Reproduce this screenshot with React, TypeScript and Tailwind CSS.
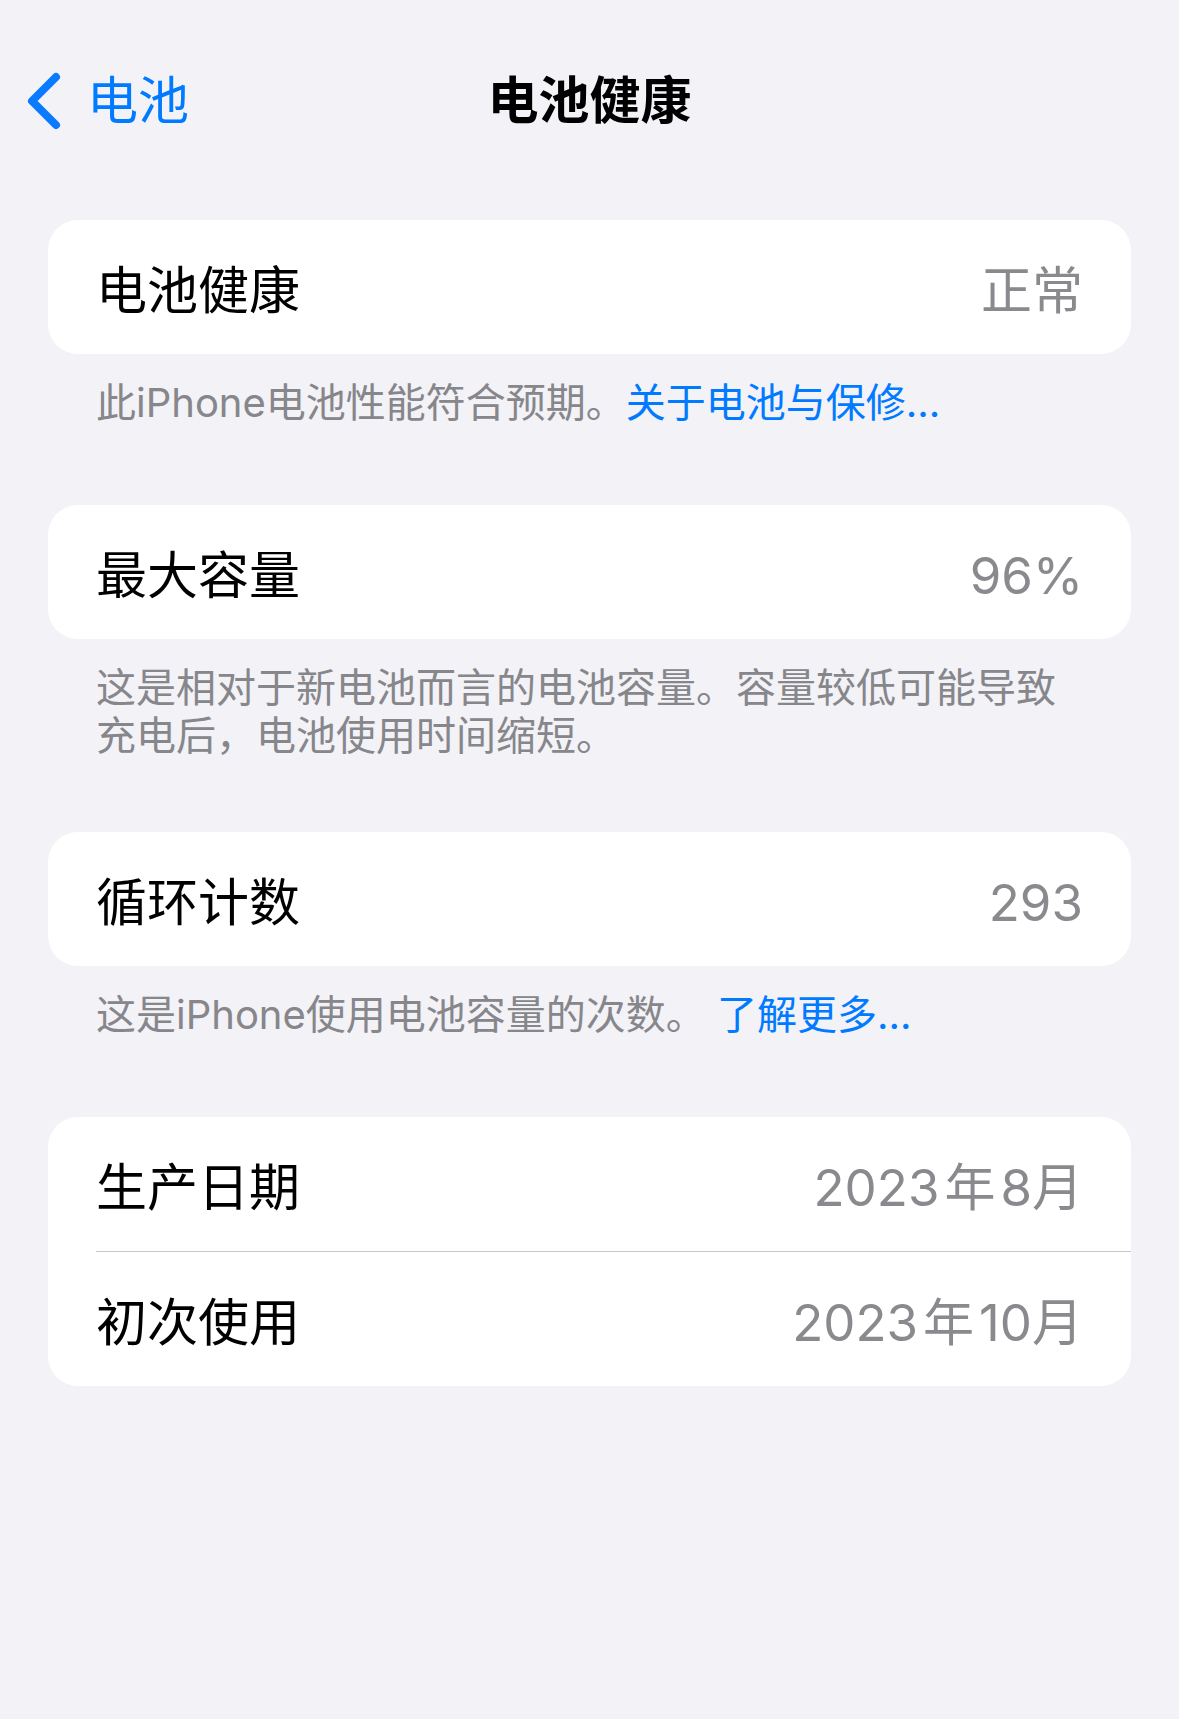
import React from "react";

type Row = { label: string; value: React.ReactNode };

function Card({ rows }: { rows: Row[] }) {
  return (
    <div className="overflow-hidden rounded-[30px] bg-white">
      {rows.map((row, i) => (
        <div key={row.label}>
          {i > 0 && <div className="ml-12 h-px bg-[#c8c8cc]" />}
          <div className="flex h-[134px] items-center justify-between px-12 pt-[7px] text-[51px] leading-[60px]">
            <span className="text-black">{row.label}</span>
            <span className="text-[#8a8a8e]">{row.value}</span>
          </div>
        </div>
      ))}
    </div>
  );
}

function Footer({ children, gap = "mb-[78px]" }: { children: React.ReactNode; gap?: string }) {
  return (
    <p className={`mt-[25px] px-12 text-[40px] leading-[48px] text-[#86868b] ${gap}`}>
      {children}
    </p>
  );
}

function MonthValue({ year, month }: { year: string; month: string }) {
  return (
    <>
      {year}
      <span className="mx-[5px]">年</span>
      {month}月
    </>
  );
}

export default function App() {
  return (
    <div className="min-h-[1719px] w-full bg-[#f2f2f7] font-['Inter','Noto_Sans_CJK_SC',sans-serif]">
      {/* navigation bar */}
      <div className="grid grid-cols-[1fr_auto_1fr] items-center pt-[69px]">
        <div className="flex items-center pl-[24px] text-[#007aff]">
          <svg width="40" height="64" viewBox="0 0 40 64" fill="none">
            <path
              d="M32 8 L8 32 L32 56"
              stroke="#0a7aff"
              strokeWidth="8"
              strokeLinecap="round"
              strokeLinejoin="round"
            />
          </svg>
          <span className="ml-[23px] text-[51px] leading-[60px]">电池</span>
        </div>
        <h1 className="text-[51px] font-semibold leading-[60px] text-black">电池健康</h1>
        <div />
      </div>

      <main className="mt-[87px] px-12">
        <Card rows={[{ label: "电池健康", value: "正常" }]} />
        <Footer>
          此iPhone电池性能符合预期。<span className="text-[#007aff]">关于电池与保修...</span>
        </Footer>

        <Card rows={[{ label: "最大容量", value: "96%" }]} />
        <Footer gap="mb-[72px]">
          这是相对于新电池而言的电池容量。容量较低可能导致充电后，电池使用时间缩短。
        </Footer>

        <Card rows={[{ label: "循环计数", value: "293" }]} />
        <Footer>
          这是iPhone使用电池容量的次数。 <span className="text-[#007aff]">了解更多...</span>
        </Footer>

        <Card
          rows={[
            { label: "生产日期", value: <MonthValue year="2023" month="8" /> },
            { label: "初次使用", value: <MonthValue year="2023" month="10" /> },
          ]}
        />
      </main>
    </div>
  );
}
